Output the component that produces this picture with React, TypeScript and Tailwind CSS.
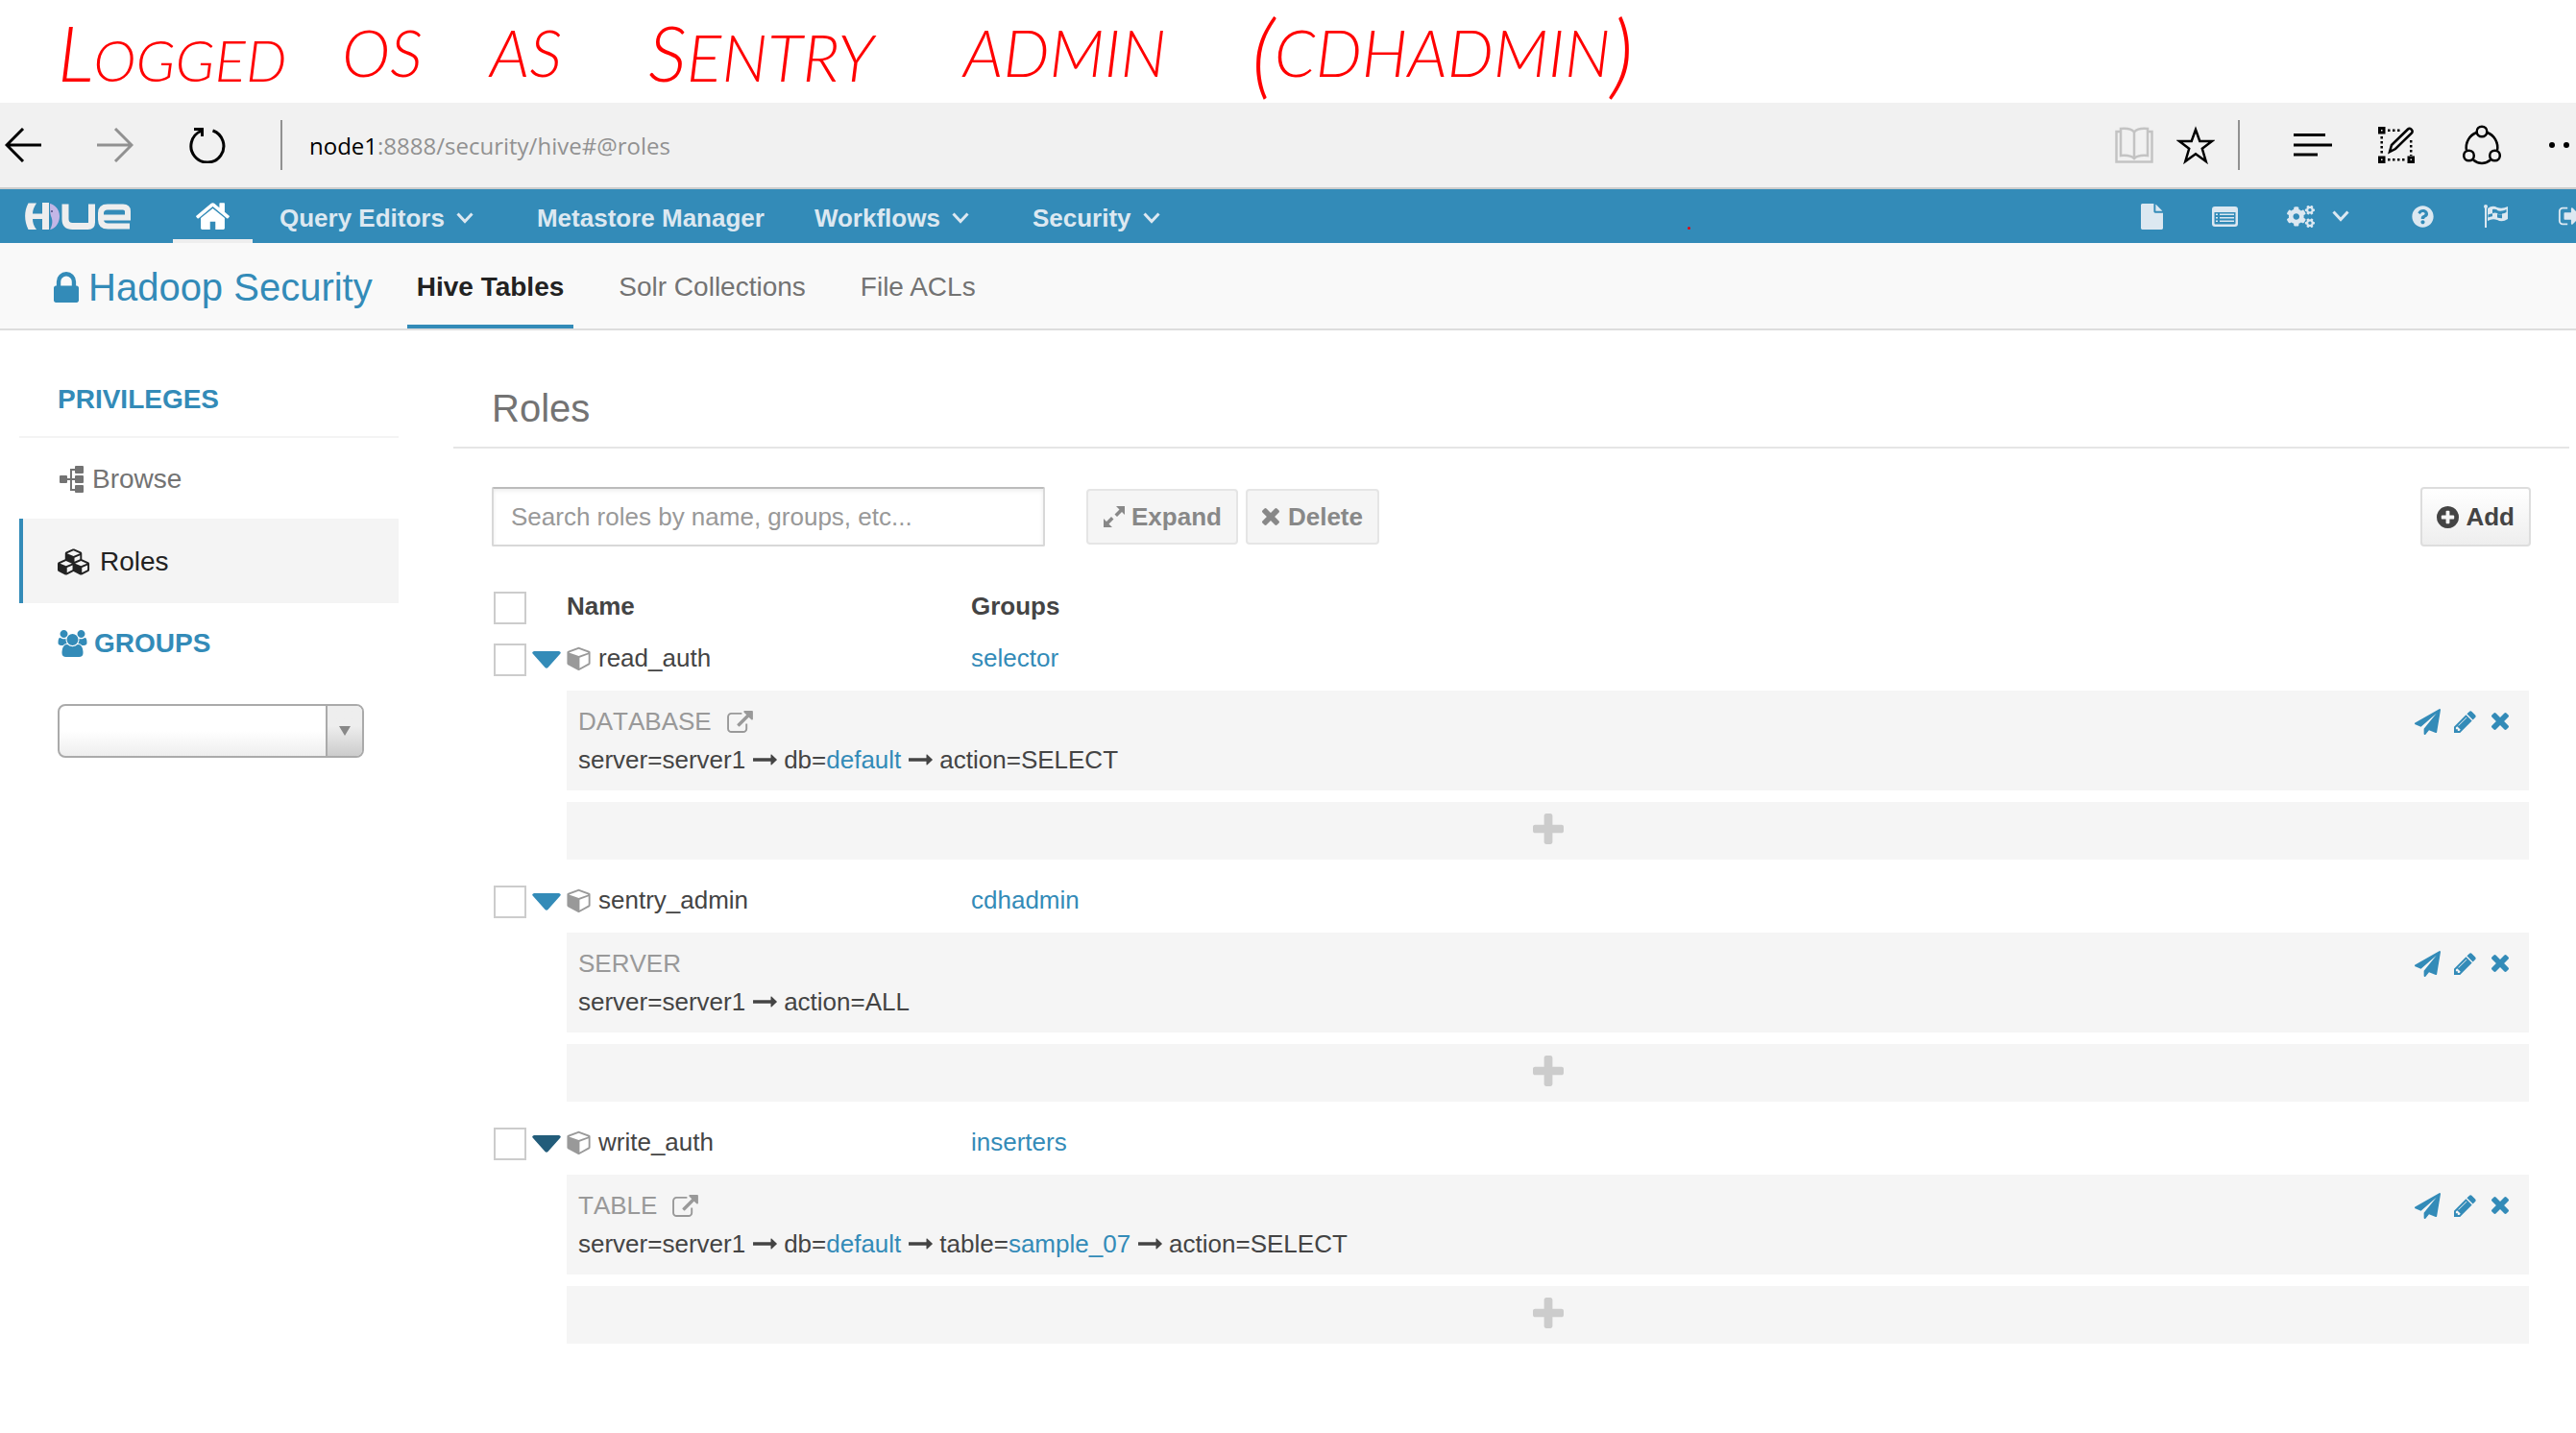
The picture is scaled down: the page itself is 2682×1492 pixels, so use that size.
import type { ReactNode } from "react";
import { FaCogs, FaFlagCheckered, FaQuestionCircle } from "react-icons/fa";

type GlyphProps = { d: string; box: string; className: string };

function Glyph({ d, box, className }: GlyphProps) {
  return (
    <svg viewBox={box} className={`${className} shrink-0 fill-current`} aria-hidden="true">
      <path d={d} />
    </svg>
  );
}

const LOCK =
  "M640 768h512v-192q0-106-75-181t-181-75-181 75-75 181v192zm832 96v576q0 40-28 68t-68 28h-960q-40 0-68-28t-28-68v-576q0-40 28-68t68-28h32v-192q0-184 132-316t316-132 316 132 132 316v192h32q40 0 68 28t28 68z";
const TIMES =
  "M1490 1322q0 40-28 68l-136 136q-28 28-68 28t-68-28l-294-294-294 294q-28 28-68 28t-68-28l-136-136q-28-28-28-68t28-68l294-294-294-294q-28-28-28-68t28-68l136-136q28-28 68-28t68 28l294 294 294-294q28-28 68-28t68 28l136 136q28 28 28 68t-28 68l-294 294 294 294q28 28 28 68z";
const PLUS =
  "M1600 736v192q0 40-28 68t-68 28h-416v416q0 40-28 68t-68 28h-192q-40 0-68-28t-28-68v-416h-416q-40 0-68-28t-28-68v-192q0-40 28-68t68-28h416v-416q0-40 28-68t68-28h192q40 0 68 28t28 68v416h416q40 0 68 28t28 68z";
const PLUS_CIRCLE =
  "M1344 960v-128q0-26-19-45t-45-19h-256v-256q0-26-19-45t-45-19h-128q-26 0-45 19t-19 45v256h-256q-26 0-45 19t-19 45v128q0 26 19 45t45 19h256v256q0 26 19 45t45 19h128q26 0 45-19t19-45v-256h256q26 0 45-19t19-45zm320-64q0 209-103 385.5t-279.5 279.5-385.5 103-385.5-103-279.5-279.5-103-385.5 103-385.5 279.5-279.5 385.5-103 385.5 103 279.5 279.5 103 385.5z";
const PENCIL =
  "M491 1536l91-91-235-235-91 91v107h128v128h107zm523-928q0-22-22-22-10 0-17 7l-542 542q-7 7-7 17 0 22 22 22 10 0 17-7l542-542q7-7 7-17zm-54-192l416 416-832 832h-416v-416zm683 96q0 53-37 90l-166 166-416-416 166-165q36-38 90-38 53 0 91 38l235 234q37 39 37 91z";
const PLANE =
  "M1764 11q33 24 27 64l-256 1536q-5 29-32 45-14 8-31 8-11 0-24-5l-453-185-242 295q-18 23-49 23-13 0-22-4-19-7-30.5-23.5t-11.5-36.5v-349l864-1059-1069 925-395-162q-37-14-40-55-2-40 32-59l1664-960q15-9 32-9 20 0 36 11z";
const EXTERNAL =
  "M1408 928v320q0 119-84.5 203.5t-203.5 84.5h-832q-119 0-203.5-84.5t-84.5-203.5v-832q0-119 84.5-203.5t203.5-84.5h704q14 0 23 9t9 23v64q0 14-9 23t-23 9h-704q-66 0-113 47t-47 113v832q0 66 47 113t113 47h832q66 0 113-47t47-113v-320q0-14 9-23t23-9h64q14 0 23 9t9 23zm384-864v512q0 26-19 45t-45 19-45-19l-176-176-652 652q-10 10-23 10t-23-10l-114-114q-10-10-10-23t10-23l652-652-176-176q-19-19-19-45t19-45 45-19h512q26 0 45 19t19 45z";
const ARROW =
  "M1728 893q0 14-10 24l-384 354q-16 14-35 6-19-9-19-29v-224h-1248q-14 0-23-9t-9-23v-192q0-14 9-23t23-9h1248v-224q0-21 19-29t35 5l384 350q10 10 10 23z";
const HOME =
  "M1472 992v480q0 26-19 45t-45 19h-384v-384h-256v384h-384q-26 0-45-19t-19-45v-480q0-1 .5-3t.5-3l575-474 575 474q1 2 1 6zm223-69l-62 74q-8 9-21 11h-3q-13 0-21-7l-692-577-692 577q-12 8-24 7-13-2-21-11l-62-74q-8-10-7-23.5t11-21.5l719-599q32-26 76-26t76 26l244 204v-195q0-14 9-23t23-9h192q14 0 23 9t9 23v408l219 182q10 8 11 21.5t-7 23.5z";
const FILE =
  "M1152 512v-472q22 14 36 28l408 408q14 14 28 36h-472zm-128 32q0 40 28 68t68 28h544v1056q0 40-28 68t-68 28h-1344q-40 0-68-28t-28-68v-1600q0-40 28-68t68-28h800v544z";
const CUBE =
  "M896 1629l640-349v-636l-640 233v752zm-64-865l698-254-698-254-698 254zm832-252v768q0 35-18 65t-49 47l-704 384q-28 16-61 16t-61-16l-704-384q-31-17-49-47t-18-65v-768q0-40 23-73t61-47l704-256q22-8 44-8t44 8l704 256q38 14 61 47t23 73z";
const CUBES =
  "M640 1632l384-192v-314l-384 164v342zm-64-454l404-173-404-173-404 173zm1088 454l384-192v-314l-384 164v342zm-64-454l404-173-404-173-404 173zm-448-293l384-165v-266l-384 164v267zm-64-379l441-189-441-189-441 189zm1088 518v416q0 36-19 67t-52 47l-448 224q-25 14-57 14t-57-14l-448-224q-4-2-7-4-2 2-7 4l-448 224q-25 14-57 14t-57-14l-448-224q-33-16-52-47t-19-67v-416q0-38 21.5-70t56.5-48l434-186v-400q0-38 21.5-70t56.5-48l448-192q23-10 50-10t50 10l448 192q35 16 56.5 48t21.5 70v400l434 186q36 16 57 48t21 70z";
const USERS =
  "M529 896q-162 5-265 128h-134q-82 0-138-40.5t-56-118.5q0-353 124-353 6 0 43.5 21t97.5 42.5 119 21.5q67 0 133-23-5 37-5 66 0 139 81 256zm1071 637q0 120-73 189.5t-194 69.5h-874q-121 0-194-69.5t-73-189.5q0-53 3.5-103.5t14-109 26.5-108.5 43-97.5 62-81 85.5-53.5 111.5-20q10 0 43 21.5t73 48 107 48 135 21.5 135-21.5 107-48 73-48 43-21.5q61 0 111.5 20t85.5 53.5 62 81 43 97.5 26.5 108.5 14 109 3.5 103.5zm-1024-1277q0 106-75 181t-181 75-181-75-75-181 75-181 181-75 181 75 75 181zm704 384q0 159-112.5 271.5t-271.5 112.5-271.5-112.5-112.5-271.5 112.5-271.5 271.5-112.5 271.5 112.5 112.5 271.5zm576 225q0 78-56 118.5t-138 40.5h-134q-103-123-265-128 81-117 81-256 0-29-5-66 66 23 133 23 59 0 119-21.5t97.5-42.5 43.5-21q124 0 124 353zm-128-609q0 106-75 181t-181 75-181-75-75-181 75-181 181-75 181 75 75 181z";
const SIGN_OUT =
  "M704 1440q0 4 1 20t.5 26.5-3 23.5-10 19.5-20.5 6.5h-320q-119 0-203.5-84.5t-84.5-203.5v-704q0-119 84.5-203.5t203.5-84.5h320q13 0 22.5 9.5t9.5 22.5q0 4 1 20t.5 26.5-3 23.5-10 19.5-20.5 6.5h-320q-66 0-113 47t-47 113v704q0 66 47 113t113 47h312l11.5 1 11.5 3 8 5.5 7 9 2 13.5zm928-544q0 26-19 45l-544 544q-19 19-45 19t-45-19-19-45v-288h-448q-26 0-45-19t-19-45v-384q0-26 19-45t45-19h448v-288q0-26 19-45t45-19 45 19l544 544q19 19 19 45z";

function Chevron() {
  return (
    <svg viewBox="0 0 18 12" className="h-3 w-[18px] shrink-0" fill="none" stroke="currentColor" strokeWidth="3" aria-hidden="true">
      <path d="M1.500 1.500 9 9.500l7.500-8" />
    </svg>
  );
}

function Note() {
  return (
    <header className="flex h-[107px] items-center pl-[60px] font-['Lato'] text-[68px] font-light italic leading-none text-[#ff0000]">
      <span className="w-[296px] text-[60px]"><span className="text-[80px]">L</span>OGGED</span>
      <span className="w-[154px]">OS</span>
      <span className="w-[165px]">AS</span>
      <span className="w-[328px]"><span className="text-[80px]">S</span>ENTRY</span>
      <span className="w-[300px]">ADMIN</span>
      <span className="flex items-center"><span className="text-[96px]">(</span>CDHADMIN<span className="text-[96px]">)</span></span>
    </header>
  );
}

function BrowserBar() {
  return (
    <div className="flex h-[90px] items-center border-b-2 border-[#cccccc] bg-[#f1f1f1] pl-[5px]">
      <button aria-label="Back" className="text-black">
        <svg viewBox="0 0 38 36" className="h-9 w-[38px]" fill="none" stroke="currentColor" strokeWidth="3"><path d="M38 18H3M19 1 2 18l17 17" /></svg>
      </button>
      <button aria-label="Forward" className="ml-[58px] text-[#919191]">
        <svg viewBox="0 0 38 36" className="h-9 w-[38px]" fill="none" stroke="currentColor" strokeWidth="3"><path d="M0 18h35M19 1l17 17-17 17" /></svg>
      </button>
      <button aria-label="Reload" className="ml-[57px] text-black">
        <svg viewBox="0 0 40 38" className="h-[38px] w-10" fill="none" stroke="currentColor" strokeWidth="3"><path d="M13 4.500A17 17 0 1 0 25.500 4M6 2.500h8.500V10" /></svg>
      </button>
      <span className="ml-[56px] h-[52px] w-[2px] bg-[#919191]" />
      <p className="ml-7 pt-[2px] font-['Open_Sans'] text-[24px] text-[#919191]"><span className="text-black">node1</span>:8888/security/hive#@roles</p>
      <div className="ml-auto flex items-center text-black">
        <button aria-label="Reading view" className="text-[#c3c3c3]">
          <svg viewBox="0 0 40 38" className="h-[38px] w-10" fill="none" stroke="currentColor" strokeWidth="2.500">
            <path d="M20 5.500C17 2 11 1.500 6 2v28c5-.5 11 0 14 3 3-3 9-3.500 14-3V2c-5-.5-11 0-14 3.500zV33M6 5H1.500v31.500h37V5H34" />
          </svg>
        </button>
        <button aria-label="Add to favourites" className="ml-6">
          <svg viewBox="0 0 40 40" className="size-10" fill="none" stroke="currentColor" strokeWidth="2.500">
            <path d="M20 4l4.300 12H37L26.800 23.800 30.700 37 20 29.200 9.300 37l3.900-13.200L3 16h12.700z" />
          </svg>
        </button>
        <span className="ml-6 h-[52px] w-[2px] bg-[#919191]" />
        <button aria-label="Hub" className="ml-14">
          <svg viewBox="0 0 40 24" className="h-6 w-10" fill="none" stroke="currentColor" strokeWidth="3"><path d="M0 1.500h33M0 12h40M0 22h25" /></svg>
        </button>
        <button aria-label="Web note" className="ml-12">
          <svg viewBox="0 0 38 38" className="size-[38px]" fill="none" stroke="currentColor" strokeWidth="2.500">
            <path d="M1.500 1.500h4.500v4.500H1.500zM1.500 32h4.500v4.500H1.500zM32 32h4.500v4.500H32z" strokeWidth="3" />
            <path d="M10 3.700h14M10 34.200h20M3.700 10v20M34.200 14v16" strokeDasharray="2.500 2.500" />
            <path d="M12 26l2-7L31 2.500c2-2 6 1 4 4L18 23z" />
          </svg>
        </button>
        <button aria-label="Share" className="ml-[50px]">
          <svg viewBox="0 0 40 42" className="h-[42px] w-10" fill="none" stroke="currentColor" strokeWidth="2.500">
            <circle cx="20" cy="7" r="5.300" /><circle cx="6.500" cy="32" r="5.300" /><circle cx="33.500" cy="32" r="5.300" />
            <path d="M14.500 8A16.500 16.500 0 0 0 4 26.500M25.500 8A16.500 16.500 0 0 1 36 26.500M11 36.500c5 4.500 13 4.500 18 0" />
          </svg>
        </button>
        <button aria-label="More" className="ml-[50px]">
          <svg viewBox="0 0 28 8" className="h-2 w-7 fill-current"><circle cx="3" cy="4" r="3" /><circle cx="18" cy="4" r="3" /></svg>
        </button>
      </div>
    </div>
  );
}

function HueLogo() {
  return (
    <svg viewBox="0 0 110 28" className="h-7 w-[110px]" role="img" aria-label="Hue">
      <path fill="#eeeeee" d="M3.500 28C-1 19-1 9 3.500 0.500H12C9 5 8 8 8 11.500h10V0h7v28h-7V17H8c0 4 1 7 4 11z" />
      <path fill="#c3b6e6" d="M26 1c5 1 10 6 10 13s-4 12-8 13.500l-2 .5c3-5 3-10 1-14-1-3-1-8-1-13z" />
      <circle cx="28" cy="9" r="1" fill="#4c4a80" />
      <path fill="none" stroke="#eeeeee" strokeWidth="7" d="M42 1.500V17q0 7.500 7.500 7.500h16q4 0 4-4V1.500" />
      <path fill="none" stroke="#eeeeee" strokeWidth="6" d="M81 15.500h26V9q0-4.500-5-4.500H86Q79 4.500 79 11v6.500q0 7 7.500 7H109" />
    </svg>
  );
}

const NAV = [
  { label: "Query Editors", menu: true },
  { label: "Metastore Manager", menu: false },
  { label: "Workflows", menu: true },
  { label: "Security", menu: true },
];

function TopNav() {
  return (
    <nav className="relative flex h-14 items-center bg-[#338bb8] pl-[26px] text-[26px] font-bold text-[#dce8f1]">
      <a href="#home" aria-label="Hue"><HueLogo /></a>
      <a href="#home" aria-label="Home" className="ml-11 flex h-14 w-[83px] items-center justify-center border-b-4 border-[#eeeeee] pt-1 text-white">
        <Glyph d={HOME} box="90 240 1612 1296" className="h-7 w-[35px]" />
      </a>
      <ul className="ml-7 flex items-center pt-[3px]">
        {NAV.map((item) => (
          <li key={item.label}>
            {item.menu ? (
              <button className="mr-[66px] flex items-center gap-3">{item.label}<Chevron /></button>
            ) : (
              <a href="#metastore" className="mr-[52px] block">{item.label}</a>
            )}
          </li>
        ))}
      </ul>
      <span className="absolute right-[922px] top-[39px] size-[3px] rounded-full bg-red-600" />
      <div className="ml-auto flex items-center">
        <a href="#documents" aria-label="Documents"><Glyph d={FILE} box="128 0 1536 1792" className="h-[27px] w-[23px]" /></a>
        <a href="#jobs" aria-label="Jobs" className="ml-[51px]">
          <svg viewBox="0 0 27 21" className="h-[21px] w-[27px] fill-current">
            <path fillRule="evenodd" d="M3 0h21q3 0 3 3v15q0 3-3 3H3q-3 0-3-3V3q0-3 3-3zM2.500 6v11.500q0 1 1 1h20q1 0 1-1V6z" />
            <path d="M4 7.500h2V9H4zM4 11h2v1.500H4zM4 14.500h2V16H4zM8 7.500h15V9H8zM8 11h15v1.500H8zM8 14.500h15V16H8z" />
          </svg>
        </a>
        <button aria-label="Administration" className="ml-[51px] flex items-center gap-[18px]"><FaCogs className="size-[29px]" /><Chevron /></button>
        <a href="#help" aria-label="Help" className="ml-[65px]"><FaQuestionCircle className="size-[23px]" /></a>
        <a href="#tour" aria-label="Tour" className="ml-[52px]">
          <svg viewBox="0 0 26 24" className="h-6 w-[26px] fill-current">
            <circle cx="2" cy="2" r="2" /><path d="M1 2h2v22H1z" />
            <path fillRule="evenodd" d="M4 4q5-4 10-1 5 2 11-1v13q-6 4-11 1-5-2-10 1zM9 5v4q3-1 5 0V5.500Q11.500 4.500 9 5zM19 6.500q-3 .5-5-.5v3.500q2 1 5 .5zM4.500 10.500v3q2-1 4.500-1.300v-3Q6.500 9.500 4.500 10.500zM14 10v3.500q2.500 1 5 .8v-4q-3 .5-5-.3zM19 9.500q2.500-.5 4.500-1.500v-3q-2 1-4.500 1.500z" />
          </svg>
        </a>
        <a href="#logout" aria-label="Sign out" className="ml-[51px]"><Glyph d={SIGN_OUT} box="0 224 1310 1344" className="h-5 w-[19px]" /></a>
      </div>
    </nav>
  );
}

function SubNav() {
  return (
    <div className="flex h-[91px] items-stretch border-b-2 border-[#dddddd] bg-[#f9f9f9] pl-14 pt-[2px] text-[28px] text-[#737373]">
      <a href="#security" className="flex items-center gap-[10px] text-[40px] text-[#338bb8]">
        <Glyph d={LOCK} box="320 128 1152 1408" className="h-8 w-[26px]" />
        Hadoop Security
      </a>
      <nav className="ml-9 flex gap-[37px]">
        <a href="#hive" className="flex items-center border-b-4 border-[#338bb8] px-[10px] pt-1 font-bold text-[#222222]">Hive Tables</a>
        <a href="#solr" className="flex items-center px-[10px]">Solr Collections</a>
        <a href="#acls" className="flex items-center px-[10px]">File ACLs</a>
      </nav>
    </div>
  );
}

function Sidebar() {
  return (
    <aside className="w-[395px] shrink-0 pt-7 text-[28px]">
      <h2 className="flex h-[84px] items-center border-b-2 border-[#f4f4f4] pl-10 pt-[6px] font-bold text-[#338bb8]">PRIVILEGES</h2>
      <a href="#browse" className="flex h-[84px] items-center pl-[42px] pt-[2px] text-[#737373]">
        <svg viewBox="0 0 25 28" className="h-7 w-[25px] fill-current" aria-hidden="true">
          <rect y="10" width="8" height="8" rx="1" />
          <rect x="16" width="9" height="8" rx="1" /><rect x="16" y="10" width="9" height="8" rx="1" /><rect x="16" y="20" width="9" height="8" rx="1" />
          <path d="M8 13h8v2H8zM11 3h5v2h-3v19h3v2h-5z" />
        </svg>
        <span className="ml-[9px]">Browse</span>
      </a>
      <a href="#roles" className="flex h-[88px] items-center border-l-4 border-[#338bb8] bg-[#f4f4f4] pl-9 pt-[2px] text-[#222222]">
        <Glyph d={CUBES} box="0 0 2304 1792" className="h-7 w-[35px]" />
        <span className="ml-[9px]">Roles</span>
      </a>
      <h2 className="flex h-[84px] items-center pl-10 font-bold text-[#338bb8]">
        <Glyph d={USERS} box="-64 0 1920 1792" className="h-7 w-[31px]" />
        <span className="ml-[7px]">GROUPS</span>
      </h2>
      <div className="relative ml-10 mt-[21px] h-14 w-[319px]">
        <select aria-label="Groups" className="size-full appearance-none rounded-[8px] border-2 border-[#aaaaaa] bg-linear-to-b from-white from-50% to-[#eeeeee]">
          <option value=""></option>
        </select>
        <span className="pointer-events-none absolute inset-y-[2px] right-[2px] flex w-[38px] items-center justify-center rounded-r-[6px] border-l-2 border-[#aaaaaa] bg-linear-to-b from-[#eeeeee] from-40% to-[#cccccc]">
          <svg viewBox="0 0 12 10" className="h-[10px] w-3 fill-[#888888]"><path d="M0 0h12L6 10z" /></svg>
        </span>
      </div>
    </aside>
  );
}

type Step = { text: string; link?: string };
type Role = { name: string; group: string; kind: string; external: boolean; dark: boolean; steps: Step[] };

const ROLES: Role[] = [
  { name: "read_auth", group: "selector", kind: "DATABASE", external: true, dark: false, steps: [{ text: "server=server1" }, { text: "db=", link: "default" }, { text: "action=SELECT" }] },
  { name: "sentry_admin", group: "cdhadmin", kind: "SERVER", external: false, dark: false, steps: [{ text: "server=server1" }, { text: "action=ALL" }] },
  { name: "write_auth", group: "inserters", kind: "TABLE", external: true, dark: true, steps: [{ text: "server=server1" }, { text: "db=", link: "default" }, { text: "table=", link: "sample_07" }, { text: "action=SELECT" }] },
];

function Check({ label }: { label: string }) {
  return <input type="checkbox" aria-label={label} className="block size-[34px] shrink-0 appearance-none border-2 border-[#cccccc] bg-white checked:bg-[#338bb8]" />;
}

function Privilege({ role }: { role: Role }) {
  return (
    <div className="flex h-[104px] justify-between bg-[#f5f5f5] pl-3 pr-[21px] pt-3">
      <div className="leading-10">
        <div className="flex items-center gap-4 text-[#999999] [font-kerning:none]">
          {role.kind}
          {role.external && (
            <a href="#open" aria-label={`Open ${role.kind}`}><Glyph d={EXTERNAL} box="0 0 1792 1536" className="h-[23px] w-[27px]" /></a>
          )}
        </div>
        <div className="flex items-center">
          {role.steps.map((step, i) => (
            <span key={step.text} className="flex items-center">
              {i > 0 && <Glyph d={ARROW} box="0 480 1728 832" className="ml-2 mr-[7px] h-3 w-[25px]" />}
              <span>{step.text}{step.link && <a href="#browse" className="text-[#338bb8]">{step.link}</a>}</span>
            </span>
          ))}
        </div>
      </div>
      <div className="flex h-10 items-center text-[#338bb8]">
        <button aria-label="Grant"><Glyph d={PLANE} box="0 0 1792 1792" className="size-[27px]" /></button>
        <button aria-label="Edit" className="ml-[14px]"><Glyph d={PENCIL} box="128 128 1536 1536" className="size-[23px]" /></button>
        <button aria-label="Remove" className="ml-4"><Glyph d={TIMES} box="302 366 1188 1188" className="size-[18px]" /></button>
      </div>
    </div>
  );
}

function ToolButton({ icon, children }: { icon: ReactNode; children: ReactNode }) {
  return (
    <button className="flex h-[58px] items-center rounded-[4px] border-2 border-[#e5e5e5] bg-[#f5f5f5] px-[15px] font-bold text-[#888888]">
      {icon}
      {children}
    </button>
  );
}

function Roles() {
  return (
    <main className="ml-[57px] mr-[7px] min-w-0 flex-1 pt-[38px]">
      <h1 className="flex h-[85px] items-center border-b-2 border-[#e5e5e5] pl-10 pt-[2px] text-[40px] text-[#737373]">Roles</h1>
      <div className="ml-10 mr-10 mt-10 flex items-center">
        <input
          type="text"
          aria-label="Search roles"
          placeholder="Search roles by name, groups, etc..."
          className="h-[62px] w-[576px] rounded-[2px] border-2 border-[#d8d8d8] border-t-[#bbbbbb] bg-white px-[18px] shadow-[inset_0_2px_4px_rgba(0,0,0,0.08)] placeholder:text-[#999999]"
        />
        <div className="ml-[43px] flex gap-2">
          <ToolButton icon={
            <svg viewBox="0 0 24 24" className="mr-[6px] size-6 fill-current" aria-hidden="true">
              <path d="M14 1h9v9l-3-3-5 5-2.500-2.500 5-5zM10 23H1v-9l3 3 5-5 2.500 2.500-5 5z" />
            </svg>
          }>Expand</ToolButton>
          <ToolButton icon={<Glyph d={TIMES} box="302 366 1188 1188" className="mr-[9px] h-[18px] w-[18px]" />}>Delete</ToolButton>
        </div>
        <button className="ml-auto flex h-[62px] items-center gap-[7px] rounded-[4px] border-2 border-[#dddddd] bg-linear-to-b from-white to-[#eeeeee] px-[15px] font-bold text-[#444444]">
          <Glyph d={PLUS_CIRCLE} box="128 128 1536 1536" className="size-[23px]" />
          Add
        </button>
      </div>
      <div className="ml-[42px] mr-[42px] mt-[37px]">
        <table className="w-full table-fixed border-collapse text-left">
          <colgroup><col className="w-[76px]" /><col className="w-[421px]" /><col /></colgroup>
          <thead>
            <tr className="h-[54px]">
              <th className="p-0"><Check label="Select all roles" /></th>
              <th className="p-0 pb-1">Name</th>
              <th className="p-0 pb-1">Groups</th>
            </tr>
          </thead>
          {ROLES.map((role) => (
            <tbody key={role.name}>
              <tr className="h-[54px]">
                <td className="p-0">
                  <div className="flex items-center gap-[6px]">
                    <Check label={`Select ${role.name}`} />
                    <button aria-label={`Collapse ${role.name}`} className={role.dark ? "text-[#225c7a]" : "text-[#338bb8]"}>
                      <svg viewBox="0 0 30 18" className="block h-[18px] w-[30px] fill-current"><path d="M2 0h26q3 1 1 3L16.500 17q-1.500 1.500-3 0L1 3Q-1 1 2 0z" /></svg>
                    </button>
                  </div>
                </td>
                <td className="p-0 pb-1">
                  <div className="flex items-center gap-2">
                    <span className="text-[#999999]"><Glyph d={CUBE} box="0 0 1664 1792" className="h-[26px] w-[25px]" /></span>
                    {role.name}
                  </div>
                </td>
                <td className="p-0 pb-1"><a href="#group" className="text-[#338bb8]">{role.group}</a></td>
              </tr>
              <tr>
                <td className="p-0" />
                <td colSpan={2} className="p-0 pb-[17px] pt-[5px]">
                  <Privilege role={role} />
                  <button aria-label={`Add privilege to ${role.name}`} className="mt-3 flex h-[60px] w-full items-center justify-center bg-[#f5f5f5] pb-1 text-[#cccccc]">
                    <Glyph d={PLUS} box="192 128 1408 1408" className="size-8" />
                  </button>
                </td>
              </tr>
            </tbody>
          ))}
        </table>
      </div>
    </main>
  );
}

export default function App() {
  return (
    <div className="min-h-screen overflow-x-hidden bg-white font-['Liberation_Sans',sans-serif] text-[26px] leading-9 text-[#444444]">
      <Note />
      <BrowserBar />
      <TopNav />
      <SubNav />
      <div className="flex items-start pl-5">
        <Sidebar />
        <Roles />
      </div>
    </div>
  );
}
